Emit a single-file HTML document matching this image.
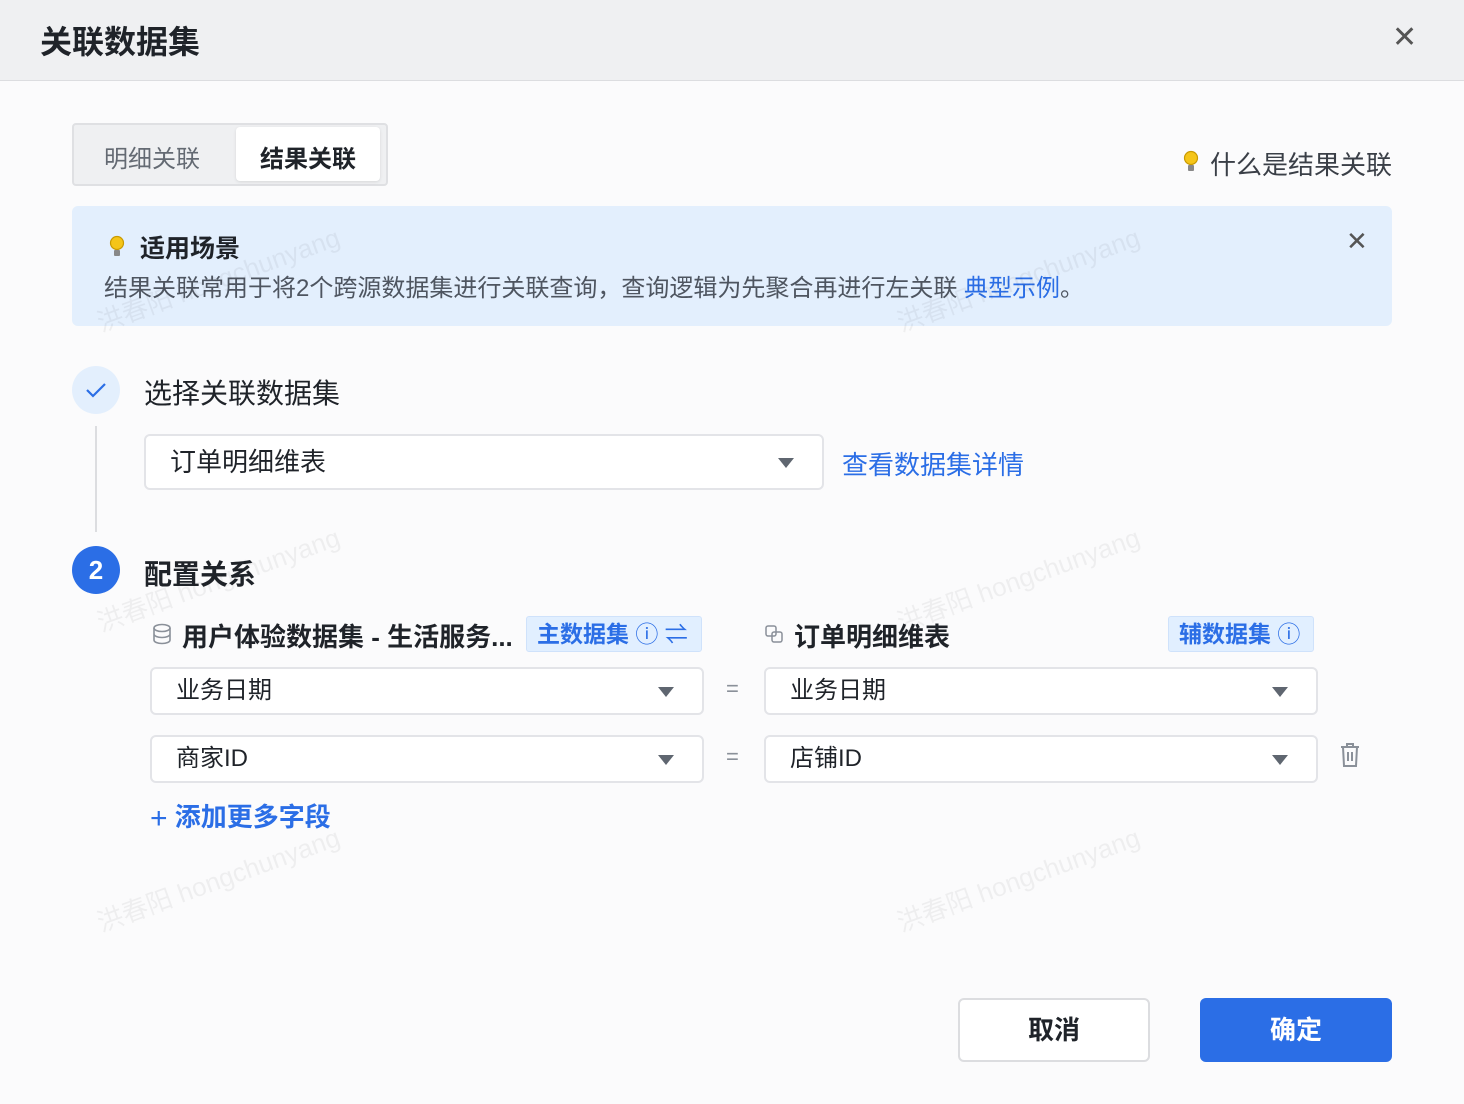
<!DOCTYPE html>
<html><head><meta charset="utf-8"><style>
*{box-sizing:border-box;margin:0;padding:0}
body{width:1464px;height:1104px;background:#fbfbfc;font-family:"Liberation Sans","Noto Sans CJK SC",sans-serif;color:#1f2329;position:relative;overflow:hidden}
.a{position:absolute;white-space:nowrap}
.sel{position:absolute;height:48px;border:2px solid #e3e4e8;border-radius:6px;background:#fff;font-size:24px;padding-left:24px;line-height:44px}
.tri{position:absolute;right:28px;top:18px;width:0;height:0;border-left:8px solid transparent;border-right:8px solid transparent;border-top:10px solid #5f6670}
.tag{position:absolute;height:36px;background:#e1efff;border:1px solid #cfe2fb;border-radius:3px;color:#2b6ee6;font-size:23px;font-weight:bold;line-height:34px;padding:0 10px;white-space:nowrap}
.wm{position:absolute;color:rgba(0,0,0,0.05);font-size:26px;transform:rotate(-20deg);white-space:nowrap}
</style></head><body>
<div class="a" style="left:0;top:0;width:1464px;height:81px;background:#eff0f2;border-bottom:1px solid #dcdde0"></div>
<div class="a" style="left:40px;top:17px;font-size:32px;font-weight:bold">关联数据集</div>
<div class="a" style="left:1392px;top:24px;font-size:30px;color:#555;line-height:28px">✕</div>

<div class="a" style="left:72px;top:123px;width:316px;height:63px;background:#eff0f2;border:2px solid #dfe0e3;border-radius:4px"></div>
<div class="a" style="left:104px;top:139px;font-size:24px;color:#646a73">明细关联</div>
<div class="a" style="left:236px;top:127px;width:144px;height:54px;background:#fff;border-radius:4px;box-shadow:0 1px 3px rgba(0,0,0,.1)"></div>
<div class="a" style="left:260px;top:139px;font-size:24px;font-weight:bold">结果关联</div>
<svg class="a" style="left:1182px;top:149px" width="18" height="26"><circle cx="9" cy="9" r="6.5" fill="#f5c518" stroke="#c99a00" stroke-width="1.2"/><rect x="6" y="16" width="6" height="6" rx="1" fill="#888"/></svg>
<div class="a" style="left:1210px;top:145px;font-size:26px;color:#3a3f47">什么是结果关联</div>

<div class="a" style="left:72px;top:206px;width:1320px;height:120px;background:#e3effd;border-radius:6px"></div>
<svg class="a" style="left:108px;top:234px" width="18" height="26"><circle cx="9" cy="9" r="6.5" fill="#f5c518" stroke="#c99a00" stroke-width="1.2"/><rect x="6" y="16" width="6" height="6" rx="1" fill="#888"/></svg>
<div class="a" style="left:140px;top:229px;font-size:25px;font-weight:bold">适用场景</div>
<div class="a" style="left:1346px;top:226px;font-size:26px;color:#555">✕</div>
<div class="a" style="left:104px;top:268px;font-size:24px;color:#4e5560">结果关联常用于将2个跨源数据集进行关联查询，查询逻辑为先聚合再进行左关联 <span style="color:#2b6ee6">典型示例</span>。</div>

<div class="a" style="left:72px;top:366px;width:48px;height:48px;border-radius:50%;background:#e3effd"></div>
<svg class="a" style="left:84px;top:378px" width="24" height="24"><path d="M3 12l6 6L21 6" stroke="#2b6ee6" stroke-width="2.2" fill="none"/></svg>
<div class="a" style="left:144px;top:372px;font-size:28px">选择关联数据集</div>
<div class="a" style="left:95px;top:426px;width:2px;height:106px;background:#dcdde0"></div>
<div class="sel" style="left:144px;top:434px;width:680px;height:56px;line-height:52px;font-size:26px">订单明细维表<div class="tri" style="top:22px"></div></div>
<div class="a" style="left:842px;top:445px;font-size:26px;color:#2b6ee6">查看数据集详情</div>

<div class="a" style="left:72px;top:546px;width:48px;height:48px;border-radius:50%;background:#2b6ee6;color:#fff;font-size:26px;font-weight:bold;text-align:center;line-height:48px">2</div>
<div class="a" style="left:144px;top:553px;font-size:28px;font-weight:bold">配置关系</div>

<svg class="a" style="left:152px;top:623px" width="20" height="22"><ellipse cx="10" cy="5" rx="8" ry="3.5" fill="none" stroke="#8a9099" stroke-width="1.6"/><path d="M2 5v12c0 2 3.5 3.5 8 3.5s8-1.5 8-3.5V5M2 11c0 2 3.5 3.5 8 3.5s8-1.5 8-3.5" fill="none" stroke="#8a9099" stroke-width="1.6"/></svg>
<div class="a" style="left:182px;top:617px;font-size:26px;font-weight:bold">用户体验数据集 - 生活服务...</div>
<div class="tag" style="left:526px;top:616px;width:176px">主数据集 <span style="font-weight:normal">ⓘ ⇌</span></div>
<svg class="a" style="left:764px;top:624px" width="20" height="20"><rect x="2" y="2" width="10" height="10" rx="2" fill="none" stroke="#8a9099" stroke-width="1.5"/><rect x="8" y="8" width="10" height="10" rx="2" fill="none" stroke="#8a9099" stroke-width="1.5"/></svg>
<div class="a" style="left:794px;top:617px;font-size:26px;font-weight:bold">订单明细维表</div>
<div class="tag" style="left:1168px;top:616px;width:146px">辅数据集 <span style="font-weight:normal">ⓘ</span></div>

<div class="sel" style="left:150px;top:667px;width:554px">业务日期<div class="tri"></div></div>
<div class="a" style="left:726px;top:676px;font-size:22px;color:#8a9099">=</div>
<div class="sel" style="left:764px;top:667px;width:554px">业务日期<div class="tri"></div></div>
<div class="sel" style="left:150px;top:735px;width:554px">商家ID<div class="tri"></div></div>
<div class="a" style="left:726px;top:744px;font-size:22px;color:#8a9099">=</div>
<div class="sel" style="left:764px;top:735px;width:554px">店铺ID<div class="tri"></div></div>
<svg class="a" style="left:1339px;top:741px" width="22" height="28"><path d="M2 6h18M8 6V3h6v3M4 6l1 19h12l1-19M9 11v9M13 11v9" fill="none" stroke="#8a9099" stroke-width="2"/></svg>
<div class="a" style="left:150px;top:797px;font-size:26px;color:#2b6ee6;font-weight:bold"><span style="font-weight:normal;font-size:30px;vertical-align:-2px">+</span> 添加更多字段</div>

<div class="a" style="left:958px;top:998px;width:192px;height:64px;border:2px solid #dcdde0;border-radius:6px;background:#fff;text-align:center;line-height:60px;font-size:26px;font-weight:bold">取消</div>
<div class="a" style="left:1200px;top:998px;width:192px;height:64px;border-radius:6px;background:#2b6ee6;color:#fff;text-align:center;line-height:64px;font-size:26px;font-weight:bold">确定</div>

<div class="wm" style="left:90px;top:860px">洪春阳 hongchunyang</div>
<div class="wm" style="left:890px;top:860px">洪春阳 hongchunyang</div>
<div class="wm" style="left:890px;top:560px">洪春阳 hongchunyang</div>
<div class="wm" style="left:90px;top:560px">洪春阳 hongchunyang</div>
<div class="wm" style="left:890px;top:260px">洪春阳 hongchunyang</div>
<div class="wm" style="left:90px;top:260px">洪春阳 hongchunyang</div>
</body></html>
